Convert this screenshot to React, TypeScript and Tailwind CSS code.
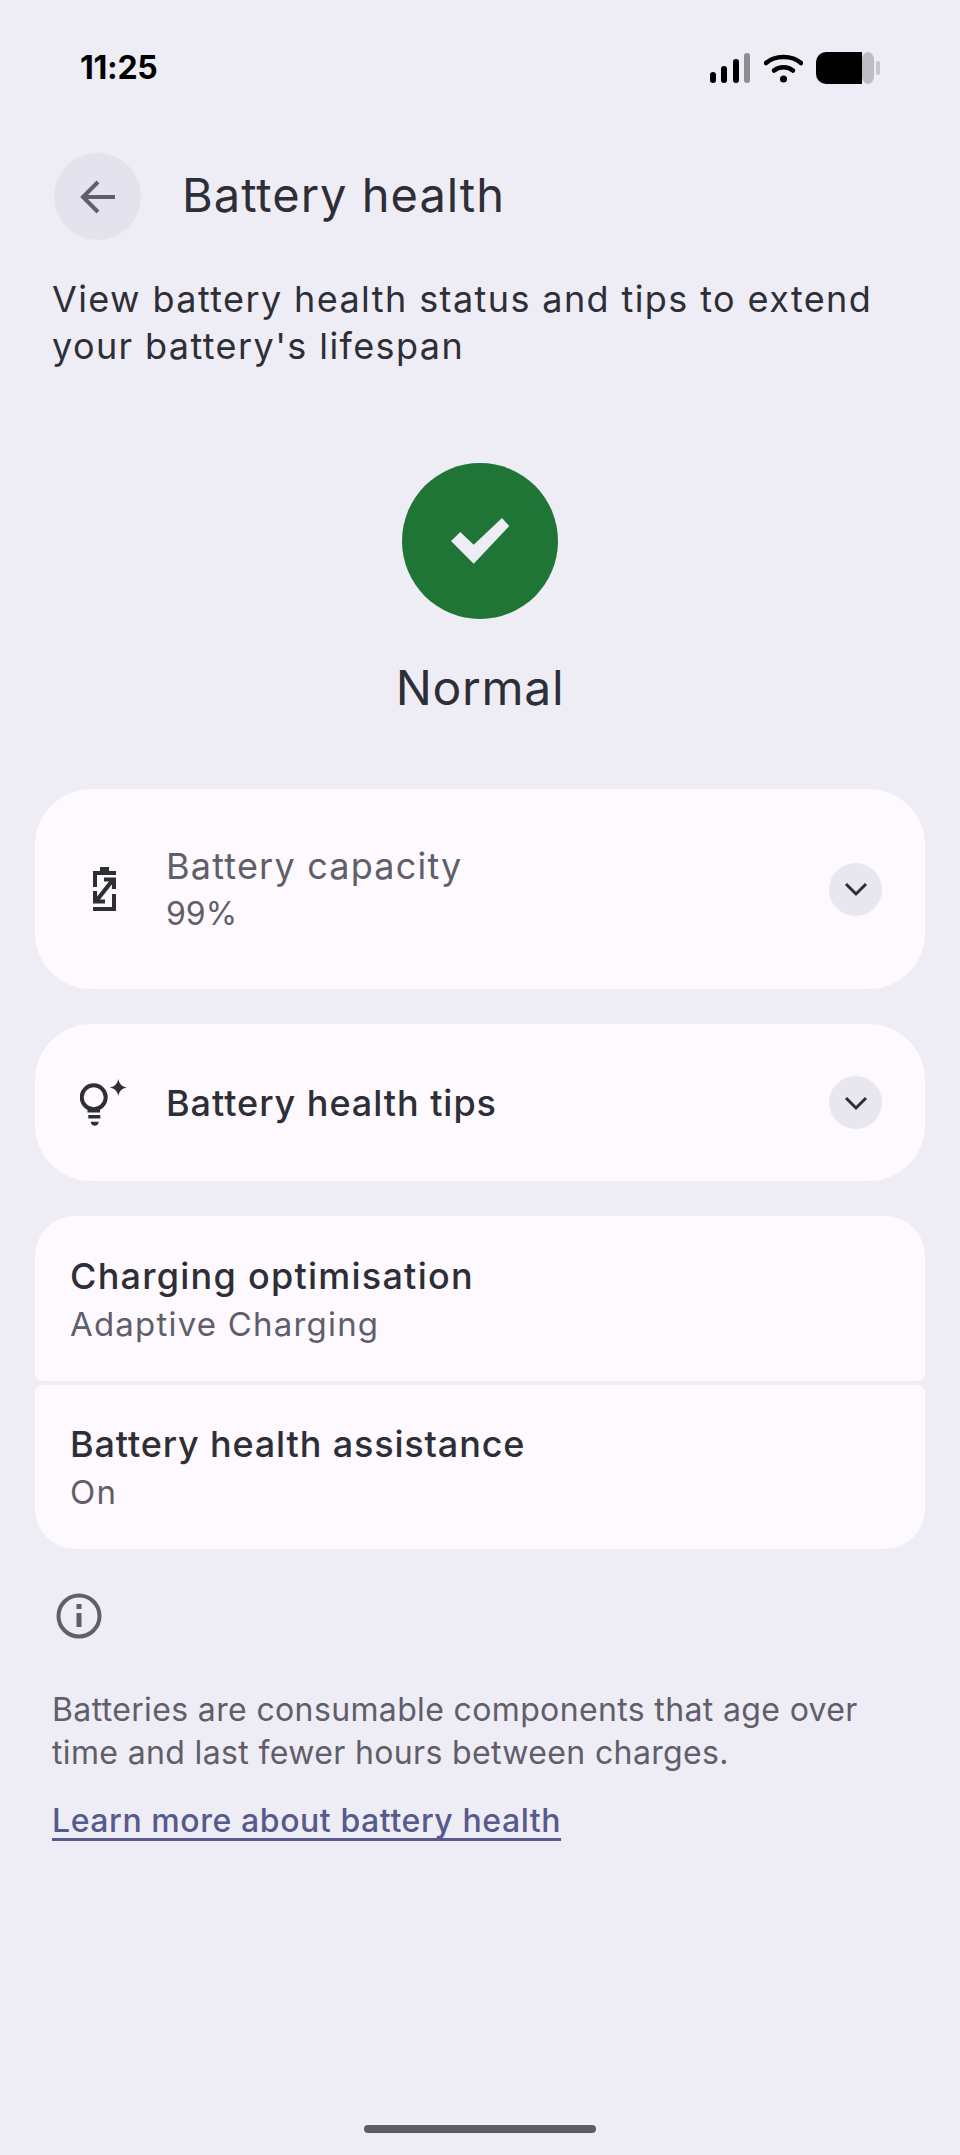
function ChevronBtn() {
  return (
    <div className="flex h-[53px] w-[53px] shrink-0 items-center justify-center rounded-full bg-[#E8E7F0]">
      <svg width="24" height="16" viewBox="0 0 24 16" fill="none">
        <path d="M2 3l10 10L22 3" stroke="#2E2E37" strokeWidth="3" />
      </svg>
    </div>
  );
}

function StatusBar() {
  return (
    <div className="flex h-[52px] items-center justify-between pl-[80px] pr-[79px]">
      <span className="text-[32px] font-bold tracking-[-0.3px] text-black">11:25</span>
      <div className="flex items-center gap-[13px]">
        <svg width="41" height="30" viewBox="0 0 41 30">
          <rect x="0" y="19" width="6" height="11" rx="3" fill="#000" />
          <rect x="11" y="13" width="6" height="17" rx="3" fill="#000" />
          <rect x="23" y="6" width="6" height="24" rx="3" fill="#000" />
          <rect x="34" y="0" width="6" height="30" rx="3" fill="#8E8D93" />
        </svg>
        <svg width="39" height="30" viewBox="0 0 39 30" fill="none">
          <path d="M2 10C11 2 28 2 37 10" stroke="#000" strokeWidth="4.5" strokeLinecap="round" />
          <path d="M10 17.5C15 13 24 13 29 17.5" stroke="#000" strokeWidth="4.5" strokeLinecap="round" />
          <circle cx="19.5" cy="26" r="3.5" fill="#000" />
        </svg>
        <svg width="65" height="33" viewBox="0 0 65 33">
          <rect x="46" y="0" width="12" height="32" rx="8" fill="#BDBCC3" />
          <path d="M10 0H46V32H10A10 10 0 0 1 0 22V10A10 10 0 0 1 10 0Z" fill="#000" />
          <rect x="60" y="9" width="4" height="14" rx="2" fill="#C9C8CE" />
        </svg>
      </div>
    </div>
  );
}

export default function App() {
  return (
    <div className="flex h-[2155px] w-[960px] flex-col overflow-hidden bg-[#EEECF5] font-['Inter',sans-serif] text-[#2E2E37]">
      <div className="pt-[42px]">
        <StatusBar />
      </div>

      <div className="mt-[59px] flex items-center gap-[41px] pl-[54px]">
        <div className="flex h-[87px] w-[87px] items-center justify-center rounded-full bg-[#E4E2EC]">
          <svg width="36" height="34" viewBox="0 0 36 34" fill="none">
            <path d="M18 2L3 17l15 15M3 17h32" stroke="#5F5E69" strokeWidth="4" />
          </svg>
        </div>
        <h1 className="mb-[4px] text-[47px] leading-[56px] tracking-[1px] text-[#2E2E37]">Battery health</h1>
      </div>

      <p className="mt-[36px] pl-[52px] pr-[40px] text-[36px] leading-[47px] tracking-[1.4px] text-[#2E2E37]">
        View battery health status and tips to extend your battery's lifespan
      </p>

      <div className="mt-[93px] flex flex-col items-center">
        <div className="flex h-[156px] w-[156px] items-center justify-center rounded-full bg-[#1F7535]">
          <svg width="59" height="46" viewBox="0 0 59 46">
            <polygon points="0,23 9.3,14 22.7,26.7 51,0 58.3,8 22.7,45.7" fill="#EEECF5" />
          </svg>
        </div>
        <div className="mt-[41px] text-[48px] leading-[56px] tracking-[0.7px]">Normal</div>
      </div>

      <div className="mt-[73px] flex flex-col gap-[35px] px-[35px]">
        <div className="flex h-[200px] items-center rounded-[56px] bg-[#FDF9FE] pl-[58px] pr-[43px]">
          <svg className="mr-[50px] shrink-0" width="23" height="44" viewBox="0 0 23 44" fill="none">
            <path d="M7 0h9v4h7v4H4v12H0V4h7zM19 27h4v17H0v-4h19z" fill="#2E2E37" />
            <path d="M4 33L19 14M11 12.500h10V22M2 24v10.500h10" stroke="#2E2E37" strokeWidth="4.2" />
          </svg>
          <div className="flex-1">
            <div className="text-[36px] leading-[46px] tracking-[1.2px] text-[#5F5E69]">Battery capacity</div>
            <div className="mt-[4px] text-[32px] leading-[42px] text-[#5F5E69]">99%</div>
          </div>
          <ChevronBtn />
        </div>

        <div className="flex h-[157px] items-center rounded-[56px] bg-[#FDF9FE] pl-[45px] pr-[43px]">
          <svg className="mr-[39px] shrink-0" width="47" height="47" viewBox="0 0 47 47" fill="none">
            <circle cx="13.7" cy="18.3" r="12" stroke="#2E2E37" strokeWidth="4" />
            <path d="M7.5 29h12.5v4.5H7.5zM8.3 36h12v3.5h-12zM10.7 42.7h8c0 2.5-2 4-4 4s-4-1.500-4-4z" fill="#2E2E37" />
            <path d="M38.300 0c1 5 3.500 7.500 8.500 8.500-5 1-7.500 3.500-8.500 8.500-1-5-3.500-7.500-8.500-8.500 5-1 7.500-3.500 8.500-8.500z" fill="#2E2E37" />
          </svg>
          <div className="flex-1 text-[36px] leading-[46px] font-medium tracking-[0.95px]">Battery health tips</div>
          <ChevronBtn />
        </div>

        <div className="flex flex-col gap-[4px]">
          <div className="flex h-[165px] flex-col justify-center rounded-t-[40px] rounded-b-[8px] bg-[#FDF9FE] px-[35px]">
            <div className="text-[36px] leading-[46px] font-medium tracking-[1.25px]">Charging optimisation</div>
            <div className="mt-[4px] text-[33px] leading-[42px] tracking-[1.2px] text-[#5F5E69]">Adaptive Charging</div>
          </div>
          <div className="flex h-[164px] flex-col justify-center rounded-t-[8px] rounded-b-[40px] bg-[#FDF9FE] px-[35px]">
            <div className="text-[36px] leading-[46px] font-medium tracking-[0.85px]">Battery health assistance</div>
            <div className="mt-[4px] text-[33px] leading-[42px] tracking-[1.2px] text-[#5F5E69]">On</div>
          </div>
        </div>
      </div>

      <div className="mt-[44px] pl-[52px] pr-[53px]">
        <svg className="ml-[4px]" width="46" height="46" viewBox="0 0 46 46" fill="none">
          <circle cx="23" cy="23" r="20.5" stroke="#5F5E69" strokeWidth="4" />
          <rect x="20.5" y="20" width="5" height="14" fill="#5F5E69" />
          <rect x="20.5" y="11" width="5" height="5" fill="#5F5E69" />
        </svg>
        <p className="mt-[49px] text-[32px] leading-[43px] tracking-[0.36px] text-[#5F5E69]">
          Batteries are consumable components that age over time and last fewer hours between charges.
        </p>
        <a className="mt-[25px] block text-[32px] leading-[43px] font-medium tracking-[0.57px] text-[#565A8C] underline decoration-[3px] underline-offset-[6px] [text-decoration-skip-ink:none]">
          Learn more about battery health
        </a>
      </div>

      <div className="mt-auto mb-[22px] h-[8px] w-[232px] self-center rounded-full bg-[#5D5C66]" />
    </div>
  );
}
